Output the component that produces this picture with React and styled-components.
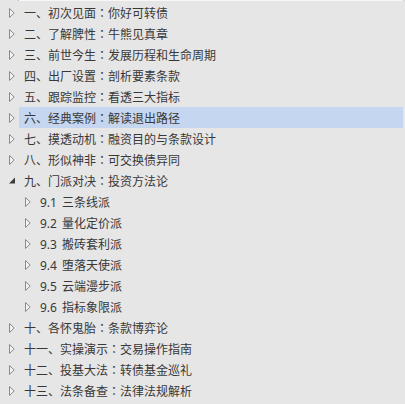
import React from 'react';
import styled, { createGlobalStyle } from 'styled-components';

const GlobalStyle = createGlobalStyle`
  html, body {
    margin: 0;
    padding: 0;
    background: #e6e6e6;
  }
  body {
    font-family: "Noto Sans CJK SC", "Noto Sans", sans-serif;
  }
`;

const chapters = [
  { label: '一、初次见面：你好可转债' },
  { label: '二、了解脾性：牛熊见真章' },
  { label: '三、前世今生：发展历程和生命周期' },
  { label: '四、出厂设置：剖析要素条款' },
  { label: '五、跟踪监控：看透三大指标' },
  { label: '六、经典案例：解读退出路径', selected: true },
  { label: '七、摸透动机：融资目的与条款设计' },
  { label: '八、形似神非：可交换债异同' },
  {
    label: '九、门派对决：投资方法论',
    open: true,
    children: [
      ['9.1', '三条线派'],
      ['9.2', '量化定价派'],
      ['9.3', '搬砖套利派'],
      ['9.4', '堕落天使派'],
      ['9.5', '云端漫步派'],
      ['9.6', '指标象限派'],
    ],
  },
  { label: '十、各怀鬼胎：条款博弈论' },
  { label: '十一、实操演示：交易操作指南' },
  { label: '十二、投基大法：转债基金巡礼' },
  { label: '十三、法条备查：法律法规解析' },
];

const Panel = styled.div`
  width: 405px;
  height: 404px;
  overflow: hidden;
  background: #e6e6e6;
`;

// bottom edge of the row scrolled off above
const TopEdge = styled.div`
  height: 1px;
  margin: 0 1px 1px 18px;
  background: #f7f7f7;
  border-left: 1px solid #b8b8b8;
  border-right: 1px solid #c8c8c8;
`;

const Tree = styled.ul`
  list-style: none;
  margin: 0;
  padding: 0 2px 0 0;
`;

const Row = styled.li`
  display: flex;
  align-items: stretch;
  height: 21px;
  padding-left: ${p => 8 + p.$depth * 16}px;
`;

const Toggle = styled.span`
  display: flex;
  align-items: center;
  width: 11px;
  flex: none;
  padding-left: 1px;
  box-sizing: border-box;
`;

const Label = styled.span`
  flex: 1;
  padding-left: ${p => (p.$depth ? 0 : 5)}px;
  margin-left: ${p => (p.$depth ? 5 : 0)}px;
  font-size: 12px;
  line-height: 21px;
  color: #383838;
  white-space: nowrap;
  background: ${p => (p.$selected ? '#c4d6f0' : 'transparent')};
`;

// full-width colon drawn centred in its cell, as in the original UI font
const Colon = styled.span`
  font-family: "Noto Sans CJK JP", "Noto Sans CJK SC", sans-serif;
`;

const Num = styled.span`
  font-family: "Noto Sans", "Noto Sans CJK SC", sans-serif;
  margin-right: 2px;
`;

const Closed = () => (
  <svg width="6" height="10" viewBox="0 0 6 10">
    <path d="M0.5 0.5 L5.2 5 L0.5 9.5 Z" fill="#f2f2f2" stroke="#8a8a8a" strokeWidth="1" />
  </svg>
);

const Opened = () => (
  <svg width="6" height="7" viewBox="0 0 6 7">
    <path d="M6 0.5 L6 6.5 L0 6.5 Z" fill="#3a3a3a" />
  </svg>
);

const Title = ({ text }) => {
  const [head, tail] = text.split('：');
  return (
    <>
      {head}
      <Colon>：</Colon>
      {tail}
    </>
  );
};

const Node = ({ depth = 0, open, selected, children }) => (
  <Row $depth={depth}>
    <Toggle>{open ? <Opened /> : <Closed />}</Toggle>
    <Label $depth={depth} $selected={selected}>{children}</Label>
  </Row>
);

export default function App() {
  return (
    <>
      <GlobalStyle />
      <Panel>
        <TopEdge />
        <Tree>
          {chapters.map(ch => (
            <React.Fragment key={ch.label}>
              <Node open={ch.open} selected={ch.selected}>
                <Title text={ch.label} />
              </Node>
              {ch.open &&
                ch.children.map(([num, name]) => (
                  <Node key={num} depth={1}>
                    <Num>{num} </Num>
                    {name}
                  </Node>
                ))}
            </React.Fragment>
          ))}
        </Tree>
      </Panel>
    </>
  );
}
